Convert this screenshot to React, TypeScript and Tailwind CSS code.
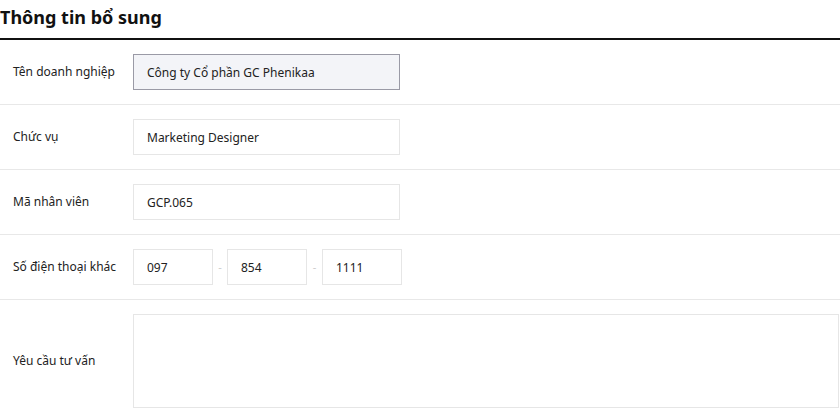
const font = { fontFamily: '"Noto Sans", "Open Sans", sans-serif' };

function Row({ label, children, last }: { label: string; children: React.ReactNode; last?: boolean }) {
  return (
    <div className={`flex items-center py-[14px] ${last ? '' : 'border-b border-[#e8e8e8]'}`}>
      <div className="w-[133px] shrink-0 pl-[13px] text-[12px] text-[#222]">{label}</div>
      {children}
    </div>
  );
}

function Field({ value, w = 'w-[267px]', disabled }: { value: string; w?: string; disabled?: boolean }) {
  return (
    <input
      readOnly
      value={value}
      className={`${w} h-[36px] px-[13px] text-[12px] text-[#222] outline-none ${
        disabled ? 'bg-[#f3f4f8] border border-[#9a9aa6]' : 'bg-white border border-[#e6e6e6]'
      }`}
      style={font}
    />
  );
}

export default function App() {
  return (
    <div className="w-[840px] h-[420px] bg-white overflow-hidden" style={font}>
      <div className="h-[40px] border-b-2 border-[#111] flex items-center">
        <h2 className="text-[18px] font-bold text-[#111] leading-none -mt-[4px]">Thông tin bổ sung</h2>
      </div>
      <Row label="Tên doanh nghiệp">
        <Field value="Công ty Cổ phần GC Phenikaa" disabled />
      </Row>
      <Row label="Chức vụ">
        <Field value="Marketing Designer" />
      </Row>
      <Row label="Mã nhân viên">
        <Field value="GCP.065" />
      </Row>
      <Row label="Số điện thoại khác">
        <div className="flex items-center">
          <Field value="097" w="w-[80px]" />
          <span className="w-[14px] text-center text-[11px] text-[#ccc]">-</span>
          <Field value="854" w="w-[80px]" />
          <span className="w-[15px] text-center text-[11px] text-[#ccc]">-</span>
          <Field value="1111" w="w-[80px]" />
        </div>
      </Row>
      <Row label="Yêu cầu tư vấn" last>
        <textarea
          readOnly
          className="w-[706px] h-[94px] border border-[#e6e6e6] resize-none outline-none"
        />
      </Row>
    </div>
  );
}
